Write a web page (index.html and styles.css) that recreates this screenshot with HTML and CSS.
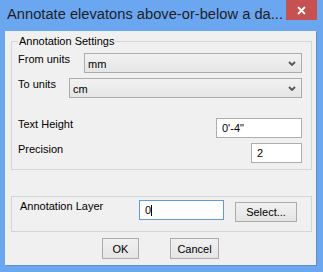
FILE: index.html
```html
<!DOCTYPE html>
<html lang="en">
<head>
  <meta charset="UTF-8">
  <title>Annotate elevations</title>
  <link rel="stylesheet" href="styles.css">
</head>
<body>
  <div class="window">
    <div class="titlebar">
      <span class="title">Annotate elevatons above-or-below a da...</span>
      <button class="close" title="Close">
        <svg width="9" height="9" viewBox="0 0 9 9"><path d="M1 1 L8 8 M8 1 L1 8" stroke="#fff" stroke-width="1.8" fill="none"/></svg>
      </button>
    </div>

    <div class="client">
      <fieldset class="group settings">
        <legend>Annotation Settings</legend>
        <div class="row">
          <span class="label">From units</span>
          <div class="combo from-units">
            <span>mm</span>
            <svg width="8" height="5" viewBox="0 0 8 5"><polyline points="1,1 4,4 7,1" stroke="#555" stroke-width="1.8" fill="none"/></svg>
          </div>
        </div>
        <div class="row">
          <span class="label">To units</span>
          <div class="combo to-units">
            <span>cm</span>
            <svg width="8" height="5" viewBox="0 0 8 5"><polyline points="1,1 4,4 7,1" stroke="#555" stroke-width="1.8" fill="none"/></svg>
          </div>
        </div>
        <div class="row spaced">
          <span class="label">Text Height</span>
          <div class="edit text-height">0'-4"</div>
        </div>
        <div class="row">
          <span class="label">Precision</span>
          <div class="edit precision">2</div>
        </div>
      </fieldset>

      <div class="group layer">
        <span class="label layer-label">Annotation Layer</span>
        <div class="edit layer-name focus">0<span class="caret"></span></div>
        <button class="btn select">Select...</button>
      </div>

      <div class="actions">
        <button class="btn ok">OK</button>
        <button class="btn cancel">Cancel</button>
      </div>
    </div>
  </div>
</body>
</html>
```

FILE: styles.css
```css
body {
  margin: 0;
  font-family: "Liberation Sans", Arial, sans-serif;
  font-size: 11px;
  color: #000;
}
.window {
  width: 323px;
  height: 272px;
  background: #6ba7f1;
  display: flex;
  flex-direction: column;
}
.titlebar {
  height: 31px;
  display: flex;
  align-items: flex-start;
  padding-left: 7px;
  flex: none;
}
.title {
  flex: 1;
  padding-top: 6px;
  line-height: 17px;
  font-size: 14.7px;
  color: #1e1e1e;
  white-space: nowrap;
  overflow: hidden;
}
.close {
  width: 31px;
  height: 20px;
  margin-right: 6px;
  border: none;
  padding: 0;
  background: #c75050;
  display: flex;
  align-items: center;
  justify-content: center;
}
.client {
  flex: 1;
  margin: 0 7px 7px 5px;
  background: #f0f0f0;
  box-shadow: 1px 1px 0 rgba(0,0,0,0.15);
  overflow: hidden;
}
.group {
  box-sizing: border-box;
  width: 301px;
  margin: 0 0 0 6px;
  border: 1px solid #d5d5d5;
}
.settings {
  margin-top: 3px;
  padding: 5px 9px 6px 6px;
}
legend {
  padding: 0 1px;
  line-height: 14px;
}
.row {
  display: flex;
  align-items: flex-start;
}
.row + .row {
  margin-top: 5px;
}
.row.spaced {
  margin-top: 20px;
}
.label {
  line-height: 13px;
  white-space: nowrap;
}
.combo {
  box-sizing: border-box;
  height: 20px;
  margin-left: auto;
  border: 1px solid #acacac;
  background: linear-gradient(#f2f2f2, #e5e5e5);
  display: flex;
  align-items: center;
  justify-content: space-between;
  padding: 1px 5px 0 3px;
}
.from-units { width: 218px; }
.to-units { width: 233px; }
.edit {
  box-sizing: border-box;
  height: 20px;
  border: 1px solid #abadb3;
  background: #fff;
  padding: 1px 0 0 5px;
  line-height: 17px;
  white-space: nowrap;
}
.row .edit {
  margin-left: auto;
}
.text-height { width: 86px; }
.precision { width: 51px; }
.layer {
  margin-top: 26px;
  padding: 3px 9px 9px 8px;
  display: flex;
  align-items: flex-start;
}
.layer-label {
  width: 119px;
}
.layer-name {
  width: 85px;
}
.edit.focus {
  border-color: #5b9be0;
}
.caret {
  display: inline-block;
  width: 1px;
  height: 11px;
  background: #000;
  vertical-align: -2px;
}
.btn {
  box-sizing: border-box;
  border: 1px solid #acacac;
  background: linear-gradient(#f0f0f0, #e5e5e5);
  font-family: inherit;
  font-size: 11px;
  color: #000;
  padding: 0;
}
.select {
  width: 62px;
  height: 20px;
  margin: 2px 0 0 11px;
}
.actions {
  display: flex;
  justify-content: center;
  gap: 31px;
  margin-top: 6px;
}
.actions .btn {
  height: 21px;
}
.ok { width: 37px; }
.cancel { width: 49px; }
```
